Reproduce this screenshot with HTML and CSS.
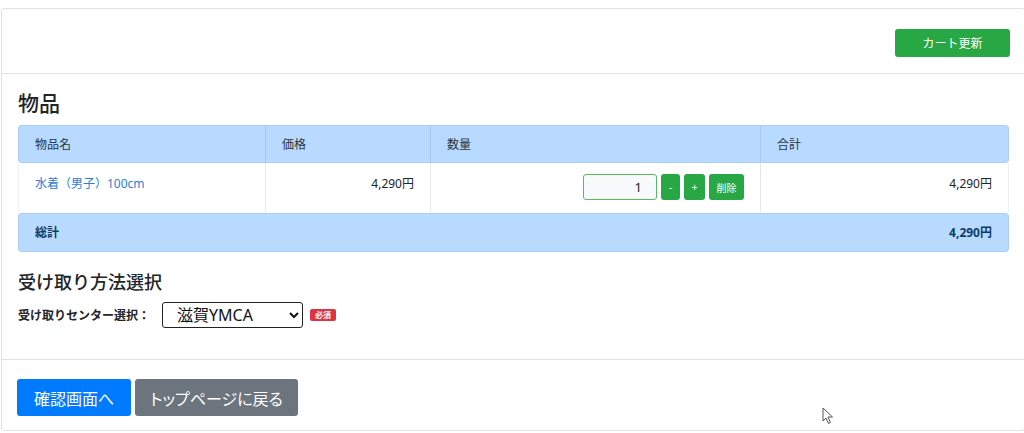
FILE: index.html
```html
<!DOCTYPE html>
<html lang="ja">
<head>
<meta charset="utf-8">
<title>カート</title>
<link rel="stylesheet" href="styles.css">
</head>
<body>
<div class="card">
  <div class="card-header">
    <button class="btn btn-success btn-sm">カート更新</button>
  </div>
  <div class="card-body">
    <h2 class="title">物品</h2>
    <table class="cart">
      <thead>
        <tr>
          <th class="c1">物品名</th>
          <th class="c2">価格</th>
          <th class="c3">数量</th>
          <th class="c4">合計</th>
        </tr>
      </thead>
      <tbody>
        <tr class="item">
          <td class="c1"><a href="#" class="link">水着（男子）100cm</a></td>
          <td class="c2 right">4,290円</td>
          <td class="c3 right">
            <div class="qty">
              <input class="qty-input" type="text" value="1">
              <button class="btn btn-success btn-xs btn-minus">-</button>
              <button class="btn btn-success btn-xs btn-plus">+</button>
              <button class="btn btn-success btn-xs btn-del">削除</button>
            </div>
          </td>
          <td class="c4 right">4,290円</td>
        </tr>
        <tr class="spacer"><td colspan="4"></td></tr>
        <tr class="total">
          <td class="first" colspan="3">総計</td>
          <td class="last right">4,290円</td>
        </tr>
      </tbody>
    </table>
    <h3 class="subtitle">受け取り方法選択</h3>
    <div class="form-row">
      <label class="label">受け取りセンター選択：</label>
      <select class="select">
        <option>滋賀YMCA</option>
      </select>
      <span class="badge">必須</span>
    </div>
  </div>
  <div class="card-footer">
    <button class="btn btn-primary btn-lg btn-confirm">確認画面へ</button>
    <button class="btn btn-secondary btn-lg btn-top">トップページに戻る</button>
  </div>
</div>
<svg class="cursor" width="12" height="18" viewBox="0 0 12 18"><path d="M1 1 L1 14 L4 11 L6.5 16.5 L8.5 15.5 L6 10 L10.5 10 Z" fill="#fff" stroke="#555" stroke-width="1"/></svg>
</body>
</html>
```

FILE: styles.css
```css
html, body {
  margin: 0;
  padding: 0;
  overflow: hidden;
  background: #fff;
}
body {
  padding-top: 8px;
  font-family: "Noto Sans", "Noto Sans CJK JP", sans-serif;
  color: #212529;
  font-size: 12px;
  position: relative;
  height: 425px;
}
.card {
  margin-left: 1px;
  width: 1024px;
  border: 1px solid #e2e2e2;
  border-radius: 3px;
  box-sizing: border-box;
}
.card-header {
  display: flex;
  justify-content: flex-end;
  padding: 20px 14px 16px 16px;
  border-bottom: 1px solid #e2e2e2;
}
.btn {
  font-family: "Noto Sans", "Noto Sans CJK JP", sans-serif;
  border: none;
  color: #fff;
  border-radius: 3px;
  cursor: pointer;
  padding: 0;
}
.btn-success { background: #28a745; }
.btn-primary { background: #007bff; }
.btn-secondary { background: #6c757d; }
.btn-sm {
  width: 115px;
  height: 28px;
  font-size: 12px;
}
.btn-xs {
  height: 26px;
  font-size: 10px;
}
.btn-minus { width: 19px; }
.btn-plus { width: 21px; }
.btn-del { width: 35px; }
.btn-lg {
  height: 37px;
  font-size: 16px;
  font-feature-settings: "palt";
}
.btn-confirm { width: 114px; }
.btn-top { width: 163px; }
.card-body {
  padding: 16px 16px 31px 16px;
}
.title {
  margin: 0 0 9px 0;
  font-size: 21px;
  font-weight: 500;
  line-height: 26px;
}
.cart {
  width: 991px;
  border-collapse: separate;
  border-spacing: 0;
  font-size: 12px;
}
.cart th {
  background: #b8daff;
  text-align: left;
  font-weight: 400;
  height: 38px;
  box-sizing: border-box;
  padding: 0 16px;
  border-top: 1px solid #a9cff7;
  border-bottom: 1px solid #a9cff7;
  border-left: 1px solid #a3cbf3;
  color: #2a3540;
}
.cart th.c1 { border-radius: 4px 0 0 4px; border-left: 1px solid #a9cff7; }
.cart th.c4 { border-radius: 0 4px 4px 0; border-right: 1px solid #a9cff7; }
.c1 { width: 247px; }
.c2 { width: 165px; }
.c3 { width: 330px; }
.cart td {
  padding: 12px 16px;
  vertical-align: top;
  line-height: 18px;
  box-sizing: border-box;
}
.item td {
  height: 49px;
  border-left: 1px solid #e6e6e6;
}
.item td.c1 { border-left: 1px solid #f0f0f0; }
.item td.c4 { border-right: 1px solid #f0f0f0; }
.item td.c3 { padding-top: 11px; padding-bottom: 0; }
.right { text-align: right; }
.link {
  color: #2a7fd4;
  text-decoration: none;
}
.qty {
  display: flex;
  justify-content: flex-end;
  gap: 4px;
}
.qty-input {
  width: 74px;
  height: 26px;
  box-sizing: border-box;
  border: 1px solid #5cb85c;
  border-radius: 3px;
  background: #f8f9fa;
  text-align: right;
  padding: 0 14px 0 4px;
  font-size: 13px;
  font-family: "Noto Sans", sans-serif;
  color: #212529;
}
.spacer td {
  height: 1px;
  padding: 0;
}
.total td {
  background: #b8daff;
  font-weight: 700;
  color: #0f3a66;
  height: 39px;
  padding: 0 16px;
  vertical-align: middle;
  border-top: 1px solid #a9cff7;
  border-bottom: 1px solid #a9cff7;
}
.total td.first { border-radius: 4px 0 0 4px; border-left: 1px solid #a9cff7; }
.total td.last { border-radius: 0 4px 4px 0; border-right: 1px solid #a9cff7; }
.subtitle {
  margin: 19px 0 8px 0;
  font-size: 18px;
  font-weight: 500;
  line-height: 23px;
}
.form-row {
  display: flex;
  align-items: center;
}
.label {
  font-weight: 700;
  font-size: 12px;
  width: 144px;
  white-space: nowrap;
}
.select {
  width: 141px;
  height: 26px;
  border: 1px solid #222;
  border-radius: 3px;
  background: #fff;
  font-size: 16px;
  padding: 0 0 0 10px;
  font-family: "Noto Sans", "Noto Sans CJK JP", sans-serif;
  color: #111;
}
.badge {
  margin-left: 7px;
  background: #dc3545;
  color: #fff;
  font-size: 8px;
  font-weight: 700;
  padding: 0 5px;
  line-height: 12px;
  border-radius: 2px;
}
.card-footer {
  display: flex;
  gap: 4px;
  padding: 19px 16px 14px 15px;
  border-top: 1px solid #e2e2e2;
}
.cursor {
  position: absolute;
  left: 822px;
  top: 407px;
}
```
